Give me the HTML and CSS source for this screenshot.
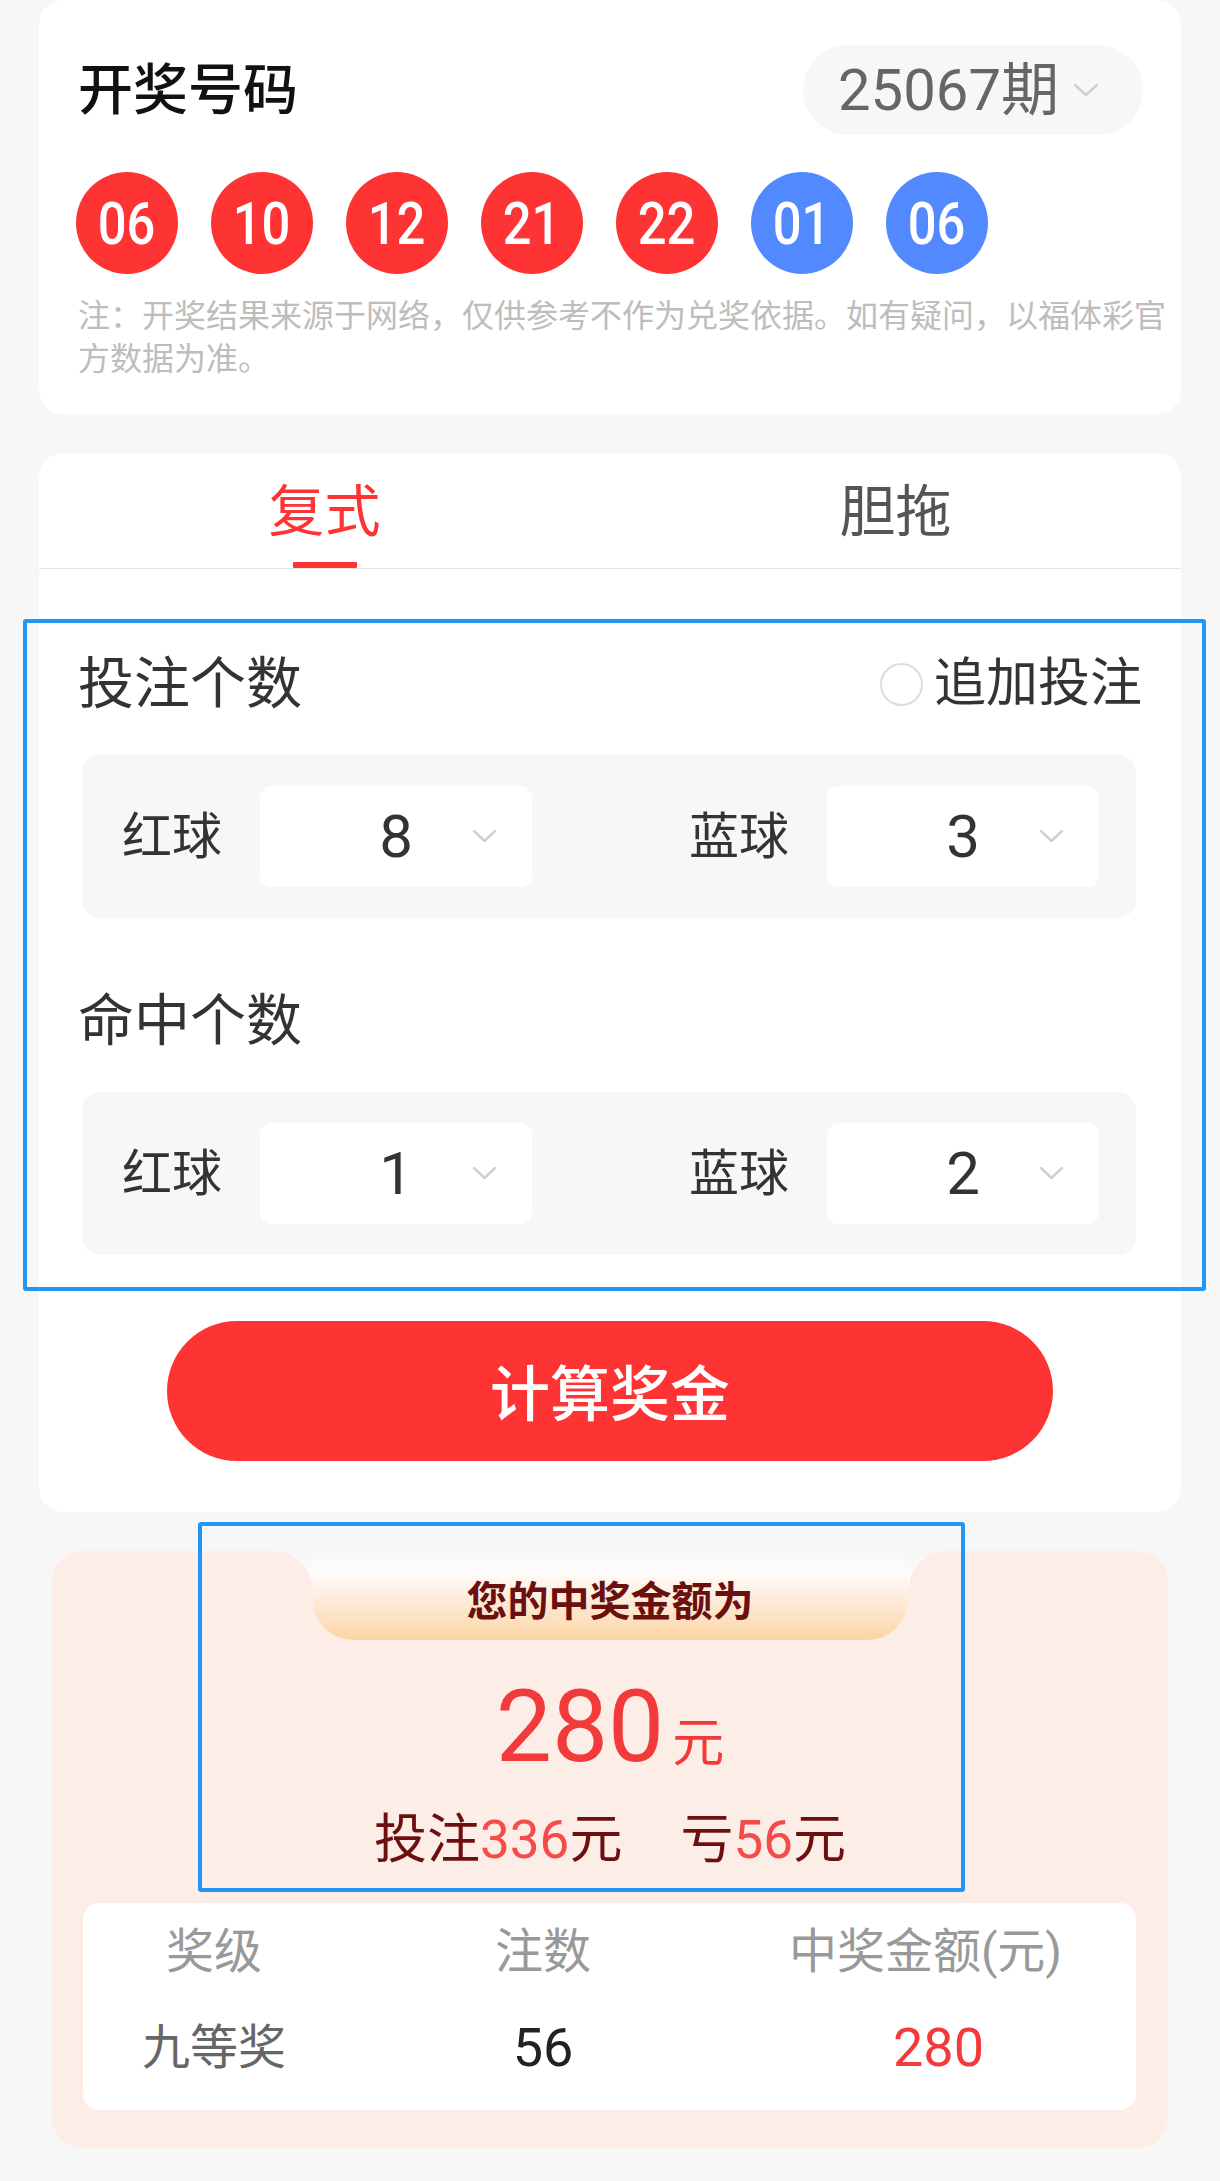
FILE: index.html
```html
<!DOCTYPE html>
<html lang="zh-CN">
<head>
<meta charset="utf-8">
<title>开奖号码</title>
<link rel="stylesheet" href="styles.css">
</head>
<body>
<div class="page">
  <section class="card draw">
    <div class="draw-head">
      <h2 class="title">开奖号码</h2>
      <div class="period">
        <span>25067期</span>
        <svg class="chev" viewBox="0 0 26 14"><polyline points="2,2 13,12 24,2" fill="none" stroke="#cfcfcf" stroke-width="2.5" stroke-linecap="round" stroke-linejoin="round"/></svg>
      </div>
    </div>
    <div class="balls">
      <span class="ball red"><span class="num">06</span></span>
      <span class="ball red"><span class="num">10</span></span>
      <span class="ball red"><span class="num">12</span></span>
      <span class="ball red"><span class="num">21</span></span>
      <span class="ball red"><span class="num">22</span></span>
      <span class="ball blue"><span class="num">01</span></span>
      <span class="ball blue"><span class="num">06</span></span>
    </div>
    <p class="note">注：开奖结果来源于网络，仅供参考不作为兑奖依据。如有疑问，以福体彩官方数据为准。</p>
  </section>

  <section class="card calc">
    <div class="tabs">
      <div class="tab active"><span class="tab-label">复式</span><span class="tab-bar"></span></div>
      <div class="tab"><span class="tab-label">胆拖</span></div>
    </div>
    <div class="form">
      <div class="sec-head">
        <span class="sec-title">投注个数</span>
        <span class="extra"><span class="radio"></span>追加投注</span>
      </div>
      <div class="pick">
        <div class="group">
          <span class="glabel">红球</span>
          <div class="select"><span class="val">8</span><svg viewBox="0 0 25 15"><polyline points="2,2 12.5,12 23,2" fill="none" stroke="#d0d0d0" stroke-width="2.5" stroke-linecap="round" stroke-linejoin="round"/></svg></div>
        </div>
        <div class="group">
          <span class="glabel">蓝球</span>
          <div class="select"><span class="val">3</span><svg viewBox="0 0 25 15"><polyline points="2,2 12.5,12 23,2" fill="none" stroke="#d0d0d0" stroke-width="2.5" stroke-linecap="round" stroke-linejoin="round"/></svg></div>
        </div>
      </div>
      <div class="sec-head second">
        <span class="sec-title">命中个数</span>
      </div>
      <div class="pick">
        <div class="group">
          <span class="glabel">红球</span>
          <div class="select"><span class="val">1</span><svg viewBox="0 0 25 15"><polyline points="2,2 12.5,12 23,2" fill="none" stroke="#d0d0d0" stroke-width="2.5" stroke-linecap="round" stroke-linejoin="round"/></svg></div>
        </div>
        <div class="group">
          <span class="glabel">蓝球</span>
          <div class="select"><span class="val">2</span><svg viewBox="0 0 25 15"><polyline points="2,2 12.5,12 23,2" fill="none" stroke="#d0d0d0" stroke-width="2.5" stroke-linecap="round" stroke-linejoin="round"/></svg></div>
        </div>
      </div>
      <button class="calc-btn" type="button">计算奖金</button>
    </div>
  </section>

  <section class="result">
    <div class="notch">
      <span class="shoulder left"></span>
      <div class="banner">您的中奖金额为</div>
      <span class="shoulder right"></span>
    </div>
    <div class="amount"><span class="amount-num">280</span><span class="amount-unit">元</span></div>
    <div class="summary">
      <span>投注<em>336</em>元</span>
      <span>亏<em>56</em>元</span>
    </div>
    <div class="table">
      <div class="th">奖级</div>
      <div class="th">注数</div>
      <div class="th th-money">中奖金额(元)</div>
      <div class="td level">九等奖</div>
      <div class="td count">56</div>
      <div class="td money">280</div>
    </div>
  </section>
</div>
<div class="hl hl-form"></div>
<div class="hl hl-result"></div>
</body>
</html>
```

FILE: styles.css
```css
html, body {
  margin: 0;
  padding: 0;
}
body {
  background: #f7f7f7;
  font-family: Roboto, "Noto Sans CJK SC", sans-serif;
  position: relative;
  min-height: 2181px;
}
.page {
  padding: 0 39px;
}
.card {
  background: #fff;
  border-radius: 24px;
}

/* draw card */
.draw {
  padding: 45px 38px 33px 39px;
}
.draw-head {
  display: flex;
  justify-content: space-between;
  align-items: center;
  height: 90px;
}
.title {
  margin: 0;
  font-size: 55px;
  font-weight: 500;
  color: #111;
  line-height: 60px;
}
.period {
  display: flex;
  align-items: center;
  height: 90px;
  padding: 0 44px 0 35px;
  border-radius: 45px;
  background: #f7f7f7;
  font-size: 58px;
  color: #666;
  line-height: 1;
}
.period .chev {
  margin-left: 14px;
  width: 26px;
  height: 14px;
}
.balls {
  display: flex;
  gap: 33px;
  margin-top: 37px;
  margin-left: -2px;
}
.ball {
  width: 102px;
  height: 102px;
  border-radius: 50%;
  display: flex;
  align-items: center;
  justify-content: center;
  color: #fff;
  font-size: 59px;
  font-weight: 500;
}
.ball .num {
  display: inline-block;
  transform: scaleX(0.86);
  line-height: 1;
}
.red { background: #fe3333; }
.blue { background: #5389fe; }
.note {
  margin: 21px -28px 0 0;
  font-size: 32px;
  line-height: 43px;
  color: #bdbdbd;
}

/* calc card */
.calc {
  margin-top: 39px;
  padding-bottom: 51px;
}
.tabs {
  display: flex;
  border-bottom: 1px solid #e4e4e4;
}
.tab {
  flex: 1;
  display: flex;
  flex-direction: column;
  align-items: center;
  padding-top: 29px;
  height: 115px;
  box-sizing: border-box;
}
.tab-label {
  font-size: 56px;
  line-height: 60px;
  color: #555;
}
.tab.active .tab-label {
  color: #fe3333;
}
.tab-bar {
  width: 64px;
  height: 6px;
  background: #fe3333;
  margin-top: 20px;
  border-radius: 1px;
}
.form {
  padding: 0 39px;
}
.sec-head {
  display: flex;
  justify-content: space-between;
  align-items: center;
  height: 60px;
  margin-top: 85px;
}
.sec-head.second {
  margin-top: 73px;
}
.sec-title {
  font-size: 56px;
  color: #333;
  line-height: 60px;
}
.extra {
  display: flex;
  align-items: center;
  gap: 11px;
  font-size: 52px;
  color: #333;
  line-height: 60px;
}
.radio {
  width: 43px;
  height: 43px;
  border: 2px solid #ddd;
  border-radius: 50%;
  box-sizing: border-box;
}
.pick {
  margin: 41px 6px 0 4px;
  background: #f7f7f7;
  border-radius: 18px;
  padding: 31px 37px 31px 40px;
  display: flex;
  justify-content: space-between;
  align-items: center;
}
.group {
  display: flex;
  align-items: center;
  gap: 38px;
}
.glabel {
  font-size: 50px;
  color: #333;
  line-height: 60px;
}
.select {
  width: 272px;
  height: 101px;
  background: #fff;
  border-radius: 12px;
  display: grid;
  grid-template-columns: 1fr auto 1fr;
  align-items: center;
}
.val {
  grid-column: 2;
  font-size: 60px;
  color: #333;
  line-height: 1;
}
.select svg {
  grid-column: 3;
  justify-self: end;
  margin-right: 35px;
  width: 25px;
  height: 15px;
}
.calc-btn {
  display: block;
  margin: 66px auto 0;
  width: 886px;
  height: 140px;
  border: none;
  border-radius: 70px;
  background: #fe3333;
  color: #fff;
  font-size: 60px;
  font-weight: 500;
  font-family: inherit;
  padding: 0 0 4px;
}

/* result */
.result {
  margin: 39px 13px 0;
  background: #fdede7;
  border-radius: 30px;
  padding-bottom: 38px;
  display: flex;
  flex-direction: column;
  align-items: center;
}
.notch {
  display: flex;
  height: 89px;
}
.shoulder {
  width: 40px;
}
.shoulder.left {
  background:
    radial-gradient(circle 40px at 0 40px, #fdede7 39.5px, transparent 40px) 0 0 / 40px 40px no-repeat,
    linear-gradient(#fdede7, #fdede7) 0 40px / 100% 100% no-repeat,
    linear-gradient(180deg, #f7f6f5 0%, #fffdfb 30%, #fffaf6 100%);
}
.shoulder.right {
  background:
    radial-gradient(circle 40px at 40px 40px, #fdede7 39.5px, transparent 40px) 0 0 / 40px 40px no-repeat,
    linear-gradient(#fdede7, #fdede7) 0 40px / 100% 100% no-repeat,
    linear-gradient(180deg, #f7f6f5 0%, #fffdfb 30%, #fffaf6 100%);
}
.banner {
  width: 595px;
  border-radius: 0 0 40px 40px;
  background: linear-gradient(180deg, #f7f6f5 0%, #fffdfb 22%, #fdebda 55%, #fcd5a3 100%);
  font-size: 41px;
  font-weight: 700;
  color: #6b0f0f;
  display: flex;
  align-items: center;
  justify-content: center;
  padding-top: 4px;
  box-sizing: border-box;
}
.amount {
  margin-top: 32px;
  height: 110px;
  line-height: 110px;
  display: flex;
  align-items: baseline;
  color: #f33a3a;
}
.amount-num {
  font-size: 100px;
}
.amount-unit {
  font-size: 52px;
  margin-left: 8px;
}
.summary {
  margin-top: 28px;
  display: flex;
  gap: 58px;
  font-size: 53px;
  line-height: 60px;
  color: #6b0f0f;
}
.summary em {
  font-style: normal;
  color: #f44b4b;
}
.table {
  align-self: stretch;
  margin: 33px 32px 0 31px;
  background: #fff;
  border-radius: 16px;
  padding: 19px 0 32px;
  display: grid;
  grid-template-columns: 262px 396px 1fr;
  row-gap: 36px;
  text-align: center;
  line-height: 60px;
}
.th {
  font-size: 48px;
  color: #999;
}
.th-money {
  padding-right: 26px;
}
.td {
  font-size: 48px;
}
.td.level { color: #666; }
.td.count { color: #222; font-size: 54px; }
.td.money { color: #f33a3a; font-size: 54px; }

/* highlight overlays */
.hl {
  position: absolute;
  border: 4px solid #2196f3;
  border-radius: 3px;
  box-sizing: border-box;
  pointer-events: none;
}
.hl-form {
  left: 23px;
  top: 619px;
  width: 1183px;
  height: 672px;
}
.hl-result {
  left: 198px;
  top: 1522px;
  width: 767px;
  height: 370px;
}
```
